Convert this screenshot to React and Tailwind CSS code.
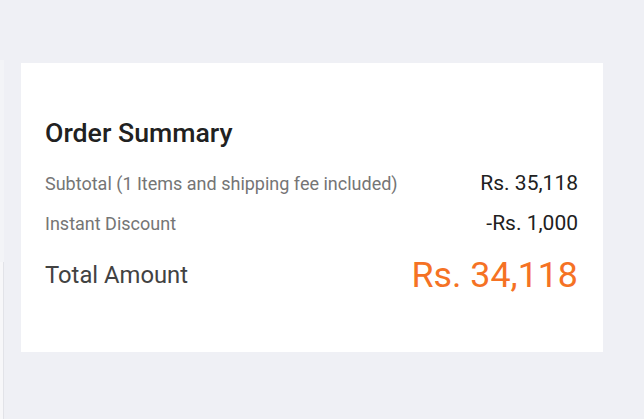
export default function App() {
  return (
    <div className="relative min-h-[419px] w-full bg-[#eff0f5] pl-[21px] pt-[63px] font-['Roboto',sans-serif]">
      {/* thin strip at the left edge of the page */}
      <div className="absolute left-0 top-[60px] h-[202px] w-[4px] bg-[#f3f4f7]" />
      <div className="absolute bottom-0 left-0 top-[262px] w-[4px] border-r border-[#e2e3e8] bg-[#f7f7f9]" />

      <div className="relative h-[289px] w-[582px] bg-white px-[24px] pt-[54px]">
        <h2 className="text-[26.7px] leading-[32px] font-medium text-[#212121]">Order Summary</h2>

        <div className="mt-[22px] flex items-baseline justify-between">
          <span className="text-[18px] leading-[24px] text-[#757575]">
            Subtotal (1 Items and shipping fee included)
          </span>
          <span className="pr-px text-[21px] leading-[24px] text-[#212121]">Rs. 35,118</span>
        </div>

        <div className="mt-[15px] flex items-baseline justify-between">
          <span className="text-[18px] leading-[24px] text-[#757575]">Instant Discount</span>
          <span className="pr-px text-[21px] leading-[24px] text-[#212121]">-Rs. 1,000</span>
        </div>

        <div className="mt-[19px] flex items-center justify-between">
          <span className="text-[23.8px] leading-[40px] text-[#424242]">Total Amount</span>
          <span className="pr-px text-[35.8px] leading-[40px] text-[#f57224]">Rs. 34,118</span>
        </div>
      </div>
    </div>
  );
}
